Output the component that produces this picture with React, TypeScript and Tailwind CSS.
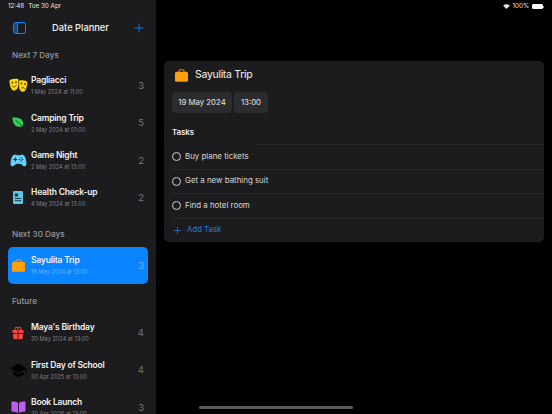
import { IoGameController, IoGift, IoSchool, IoBook, IoAdd } from 'react-icons/io5';
import type { ReactNode } from 'react';

type Plan = { title: string; date: string; count: number; icon: ReactNode; selected?: boolean };

function MasksIcon() {
  return (
    <svg width="19" height="15" viewBox="0 0 19 15">
      <path d="M0.5 2.2 C3.5 0.6 6.5 0.4 9.5 1.2 C10 5 9.8 8 8.6 10 C7.2 12.2 5.4 13 4 12.4 C1.8 11.4 0.4 7 0.5 2.2Z" fill="#ffd60a" />
      <path d="M9.8 2.4 C12.6 1.6 15.6 2 18.5 3.4 C18.6 8 17.2 12.6 15 13.8 C13.4 14.6 11.6 13.6 10.4 11.4 C9.6 9.6 9.6 5.6 9.8 2.4Z" fill="#ffd60a" stroke="#1c1c1e" strokeWidth="0.5" />
      <circle cx="3.4" cy="4.6" r="0.9" fill="#4a3d00" />
      <circle cx="7" cy="4.2" r="0.9" fill="#4a3d00" />
      <path d="M3 7.6 C4 9.6 6.4 9.4 7.4 7.2" fill="none" stroke="#4a3d00" strokeWidth="0.8" />
      <circle cx="12.4" cy="5.4" r="0.9" fill="#4a3d00" />
      <circle cx="16" cy="6" r="0.9" fill="#4a3d00" />
      <path d="M12 10.6 C13 9 15 9.2 15.8 11" fill="none" stroke="#4a3d00" strokeWidth="0.8" />
    </svg>
  );
}

function LeafIcon() {
  return (
    <svg width="13" height="12" viewBox="0 0 13 12">
      <path d="M0.4 0.6 C4 0 9.5 0.4 11 5 C11.6 7 11 8.6 10 9.4 C7 10.4 3.6 9.6 2 7 C1 5.2 0.6 3 0.4 0.6Z" fill="#30d158" />
      <path d="M3.4 3.2 C6 5 9 8 12.6 11.6" fill="none" stroke="#1c1c1e" strokeWidth="0.7" />
    </svg>
  );
}

function ChartIcon() {
  return (
    <svg width="10" height="13" viewBox="0 0 10 13">
      <rect width="10" height="13" rx="1.2" fill="#5ac8e6" />
      <rect x="1.8" y="2.5" width="3.2" height="3" fill="#14343e" />
      <rect x="1.8" y="7" width="6.4" height="0.9" fill="#14343e" />
      <rect x="1.8" y="9.3" width="6.4" height="0.9" fill="#14343e" />
    </svg>
  );
}

function CaseIcon() {
  return (
    <svg width="13" height="13" viewBox="0 0 13 13">
      <path d="M4 3V1.8C4 1.1 4.4 0.7 5.1 0.7H7.9C8.6 0.7 9 1.1 9 1.8V3" fill="none" stroke="#ff9f0a" strokeWidth="0.9" />
      <rect y="2.8" width="13" height="10" rx="1.5" fill="#ff9f0a" />
    </svg>
  );
}

const nextWeek: Plan[] = [
  { title: 'Pagliacci', date: '1 May 2024 at 11:00', count: 3, icon: <MasksIcon /> },
  { title: 'Camping Trip', date: '2 May 2024 at 01:00', count: 5, icon: <LeafIcon /> },
  { title: 'Game Night', date: '2 May 2024 at 13:00', count: 2, icon: <IoGameController className="text-[17px] text-[#64d2ff]" /> },
  { title: 'Health Check-up', date: '4 May 2024 at 13:00', count: 2, icon: <ChartIcon /> },
];

const nextMonth: Plan[] = [
  { title: 'Sayulita Trip', date: '19 May 2024 at 13:00', count: 3, icon: <CaseIcon />, selected: true },
];

const future: Plan[] = [
  { title: "Maya's Birthday", date: '30 May 2024 at 13:00', count: 4, icon: <IoGift className="text-[14px] text-[#ff453a]" /> },
  { title: 'First Day of School', date: '30 Apr 2025 at 13:00', count: 4, icon: <IoSchool className="text-[17px] text-black" /> },
  { title: 'Book Launch', date: '30 Apr 2026 at 13:00', count: 3, icon: <IoBook className="text-[15px] text-[#bf5af2]" /> },
];

const tasks = ['Buy plane tickets', 'Get a new bathing suit', 'Find a hotel room'];

function PlanRow({ plan }: { plan: Plan }) {
  return (
    <div className={`flex h-[37.4px] items-center rounded-[5px] pr-[4px] ${plan.selected ? 'bg-[#0a84ff]' : ''}`}>
      <div className="flex w-[20px] shrink-0 justify-center">{plan.icon}</div>
      <div className="ml-[3px] min-w-0 flex-1">
        <div className="whitespace-nowrap text-[8.5px] leading-[12px] font-semibold tracking-[-0.2px] text-[#f2f2f2]">{plan.title}</div>
        <div className={`mt-[2px] whitespace-nowrap text-[5.6px] leading-[9px] ${plan.selected ? 'text-[#6fb2f5]' : 'text-[#7f7f83]'}`}>{plan.date}</div>
      </div>
      <span className={`pt-[1px] text-[9.5px] ${plan.selected ? 'text-[#6fb2f5]' : 'text-[#77777b]'}`}>{plan.count}</span>
    </div>
  );
}

function Section({ title, plans }: { title: string; plans: Plan[] }) {
  return (
    <div>
      <h2 className="pl-[4px] text-[8.2px] leading-[14px] font-medium text-[#98989d]">{title}</h2>
      <div className="mt-[5.5px] flex flex-col">
        {plans.map(plan => <PlanRow key={plan.title} plan={plan} />)}
      </div>
    </div>
  );
}

export default function App() {
  return (
    <div className="relative flex h-[414px] w-[552px] overflow-hidden bg-black font-['Inter',sans-serif]">
      <aside className="h-full w-[156px] shrink-0 overflow-hidden bg-[#1c1c1e] px-[8px]">
        <div className="flex h-[11px] items-end gap-[4px] text-[6.3px] leading-[9px] text-[#e5e5e5]">
          <span>12:48</span>
          <span>Tue 30 Apr</span>
        </div>
        <div className="mt-[3px] flex h-[26px] items-center justify-between pl-[5px] pr-[2px] pt-[2px]">
          <svg width="13" height="12" viewBox="0 0 13 12" fill="none" stroke="#0a84ff" strokeWidth="1">
            <rect x="0.5" y="0.5" width="12" height="11" rx="2" />
            <rect x="1" y="1" width="3.6" height="10" fill="#0a84ff" fillOpacity="0.45" stroke="none" />
            <path d="M4.6 0.5v11" />
          </svg>
          <span className="pl-[3px] text-[9.3px] font-medium text-[#f2f2f2]">Date Planner</span>
          <IoAdd className="text-[14px] text-[#0a84ff]" />
        </div>
        <div className="mt-[7.5px] flex flex-col gap-[10.5px]">
          <Section title="Next 7 Days" plans={nextWeek} />
          <Section title="Next 30 Days" plans={nextMonth} />
          <Section title="Future" plans={future} />
        </div>
      </aside>

      <main className="min-w-0 flex-1 px-[8px] pt-[2px]">
        <div className="flex h-[9px] items-center justify-end gap-[3px] text-[6.3px] leading-[9px] text-[#e5e5e5]">
          <svg width="7" height="5" viewBox="0 0 8 6" fill="#e5e5e5">
            <path d="M4 6 L0 2 A5.6 5.6 0 0 1 8 2 Z" />
          </svg>
          <span>100%</span>
          <span className="flex items-center gap-[0.5px]">
            <span className="h-[5.5px] w-[10.5px] rounded-[1.5px] bg-white" />
            <span className="h-[2px] w-[0.8px] bg-[#8a8a8a]" />
          </span>
        </div>
        <section className="mt-[50px] h-[181px] rounded-[5px] bg-[#1c1c1e] pl-[8px] pt-[5px]">
          <div className="flex items-center gap-[7px] pl-[3px]">
            <CaseIcon />
            <h1 className="text-[10.5px] leading-[18px] tracking-[-0.3px] text-[#f2f2f2]">Sayulita Trip</h1>
          </div>
          <div className="mt-[8px] flex gap-[2px]">
            <span className="flex h-[21px] w-[60px] items-center justify-center rounded-[4px] bg-[#2c2c2e] text-[7.8px] text-[#e5e5e5]">19 May 2024</span>
            <span className="flex h-[21px] w-[34px] items-center justify-center rounded-[4px] bg-[#2c2c2e] text-[7.8px] text-[#e5e5e5]">13:00</span>
          </div>
          <h3 className="mt-[12px] text-[7.8px] leading-[14px] font-semibold text-[#f2f2f2]">Tasks</h3>
          <div className="mt-[5px] -mb-px ml-[84px] h-px bg-[#2a2a2c]" />
          <ul>
            {tasks.map((task, i) => (
              <li key={task} className={`flex h-[24.5px] items-center gap-[4px] border-t ${i === 0 ? 'border-transparent' : 'border-[#2a2a2c]'}`}>
                <span className="h-[9px] w-[9px] rounded-full border border-[#d0d0d0]" />
                <span className="text-[7.9px] text-[#d8d8d8]">{task}</span>
              </li>
            ))}
            <li className="flex h-[24.5px] items-center gap-[4px] border-t border-[#2a2a2c]">
              <IoAdd className="text-[11px] text-[#1f7fe0]" />
              <span className="text-[7.8px] text-[#1f7fe0]">Add Task</span>
            </li>
          </ul>
        </section>
      </main>

      <div className="absolute bottom-[5px] left-[199px] h-[3px] w-[154px] rounded-full bg-[#5a5a5c]" />
    </div>
  );
}
